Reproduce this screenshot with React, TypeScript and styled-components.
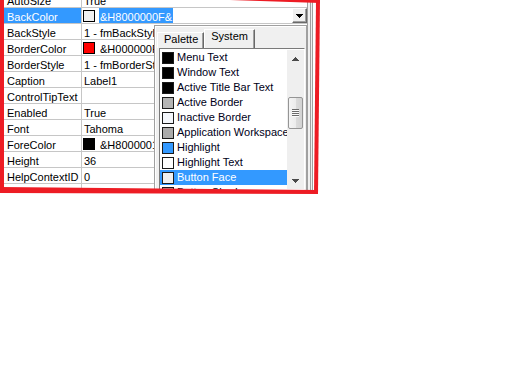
import React from "react";
import styled, { createGlobalStyle } from "styled-components";

const GlobalStyle = createGlobalStyle`
  html, body { margin: 0; padding: 0; background: #ffffff; }
  body {
    font-family: "Liberation Sans", Arial, sans-serif;
    font-size: 11px;
    color: #000000;
  }
`;

const Stage = styled.div`
  position: relative;
  width: 320px;
  height: 195px;
  padding-left: 4px;
  box-sizing: border-box;
`;

const Annotation = styled.svg`
  position: absolute;
  left: 0;
  top: 0;
  width: 320px;
  height: 195px;
  pointer-events: none;
  z-index: 10;
`;

const PropWindow = styled.div`
  position: relative;
  width: 310px;
  height: 191px;
  overflow: hidden;
  display: flex;
  align-items: flex-start;
  background: #f0f0f0;
`;

const Grid = styled.div`
  flex: none;
  width: 303px;
  margin-top: -8px;
  background: #ffffff;
  border-right: 1px solid #a0a0a0;
`;

const WindowEdge = styled.div`
  flex: 1;
  align-self: stretch;
  background: linear-gradient(
    to right,
    #f0f0f0 0 2px,
    #a0a0a0 2px 3px,
    #f0f0f0 3px 4px,
    #a0a0a0 4px 5px,
    #ffffff 5px 6px
  );
`;

const Row = styled.div`
  display: flex;
  height: 16px;
  box-sizing: border-box;
  border-bottom: 1px solid #c6c6c6;
`;

const NameCell = styled.div<{ $selected?: boolean }>`
  flex: none;
  width: 78px;
  box-sizing: border-box;
  border-right: 1px solid #c6c6c6;
  padding: 3px 0 0 3px;
  line-height: 12px;
  white-space: nowrap;
  overflow: hidden;
  background: ${(p) => (p.$selected ? "#3399ff" : "#ffffff")};
  color: ${(p) => (p.$selected ? "#ffffff" : "#000000")};
`;

const ValueCell = styled.div`
  flex: 1;
  min-width: 0;
  display: flex;
  align-items: flex-start;
  padding: 3px 0 0 2px;
  line-height: 12px;
  white-space: nowrap;
  overflow: hidden;
`;

const ValueSwatch = styled.span<{ $color: string }>`
  flex: none;
  width: 12px;
  height: 12px;
  margin: -1px 5px 0 -1px;
  box-sizing: border-box;
  border: 1px solid #000000;
  background: ${(p) => p.$color};
`;

const Combo = styled.div`
  flex: 1;
  min-width: 0;
  display: flex;
  align-items: flex-start;
  background: #ffffff;
  white-space: nowrap;
`;

const ComboSwatch = styled(ValueSwatch)`
  margin: 2px 4px 0 1px;
`;

const SelectedText = styled.span`
  display: block;
  height: 15px;
  box-sizing: border-box;
  padding: 3px 1px 0 1px;
  line-height: 12px;
  background: #3399ff;
  color: #ffffff;
`;

const DropButton = styled.div`
  flex: none;
  margin-left: auto;
  width: 15px;
  height: 15px;
  box-sizing: border-box;
  display: flex;
  align-items: center;
  justify-content: center;
  background: #f0f0f0;
  border-top: 1px solid #ffffff;
  border-left: 1px solid #ffffff;
  border-right: 1px solid #696969;
  border-bottom: 1px solid #696969;
  box-shadow: inset -1px -1px 0 #a0a0a0;
`;

const Popup = styled.div`
  position: absolute;
  left: 150px;
  top: 25px;
  width: 153px;
  height: 175px;
  box-sizing: border-box;
  border: 1px solid #a0a0a0;
  box-shadow: inset 1px 1px 0 #ffffff;
  background: #f0f0f0;
  padding: 3px 1px 0 2px;
  display: flex;
  flex-direction: column;
  z-index: 2;
`;

const TabRow = styled.div`
  display: flex;
  align-items: flex-end;
  height: 19px;
  flex: none;
`;

const Tab = styled.div<{ $active?: boolean }>`
  box-sizing: border-box;
  height: ${(p) => (p.$active ? 19 : 16)}px;
  padding: 0 ${(p) => (p.$active ? 6 : 5)}px 0 6px;
  line-height: 13px;
  white-space: nowrap;
  background: #f0f0f0;
  border-left: 1px solid #ffffff;
  border-top: 1px solid #ffffff;
  border-right: 1px solid #696969;
  box-shadow: inset -1px 0 0 #a0a0a0;
`;

const ListBox = styled.div`
  flex: 1;
  margin-left: 2px;
  width: 146px;
  box-sizing: border-box;
  display: flex;
  align-items: flex-start;
  border-left: 1px solid #7a7a7a;
  border-top: 1px solid #7a7a7a;
  border-right: 1px solid #ffffff;
  padding-top: 1px;
  background: #ffffff;
`;

const List = styled.div`
  width: 127px;
  flex: none;
  display: flex;
  flex-direction: column;
`;

const ListRow = styled.div<{ $selected?: boolean }>`
  height: 15px;
  flex: none;
  display: flex;
  align-items: center;
  padding-left: 2px;
  line-height: 15px;
  white-space: nowrap;
  background: ${(p) => (p.$selected ? "#3399ff" : "transparent")};
  color: ${(p) => (p.$selected ? "#ffffff" : "#000018")};
`;

const ListSwatch = styled.span<{ $color: string }>`
  flex: none;
  width: 12px;
  height: 12px;
  margin-right: 3px;
  box-sizing: border-box;
  border: 1px solid #1a1a1a;
  background: ${(p) => p.$color};
`;

const ScrollBar = styled.div`
  flex: none;
  width: 17px;
  height: 139px;
  display: flex;
  flex-direction: column;
  background: #efefef;
`;

const ScrollButton = styled.div`
  flex: none;
  height: 17px;
  display: flex;
  align-items: center;
  justify-content: center;
`;

const ScrollTrack = styled.div`
  flex: 1;
  display: flex;
  flex-direction: column;
  align-items: center;
`;

const Thumb = styled.div`
  margin-top: 30px;
  width: 15px;
  height: 32px;
  box-sizing: border-box;
  border: 1px solid #959595;
  border-radius: 2px;
  background: linear-gradient(to right, #f4f4f4 0%, #ececec 50%, #dcdcdc 50%, #d2d2d2 100%);
  display: flex;
  align-items: center;
  justify-content: center;
`;

const Grip = styled.div`
  width: 7px;
  height: 8px;
  background: repeating-linear-gradient(
    to bottom,
    #6b6b6b 0 1px,
    #fbfbfb 1px 2px
  );
`;

type Arrow = "up" | "down";

const ArrowIcon = ({ dir, color }: { dir: Arrow; color: string }) => (
  <svg width="7" height="4" viewBox="0 0 7 4" shapeRendering="crispEdges">
    {dir === "down" ? (
      <polygon points="0,0 7,0 3.5,4" fill={color} />
    ) : (
      <polygon points="0,4 7,4 3.5,0" fill={color} />
    )}
  </svg>
);

type Prop = {
  name: string;
  value: string;
  swatch?: string;
  combo?: boolean;
};

const props: Prop[] = [
  { name: "AutoSize", value: "True" },
  { name: "BackColor", value: "&H8000000F&", swatch: "#f0f0f0", combo: true },
  { name: "BackStyle", value: "1 - fmBackStyleOpaque" },
  { name: "BorderColor", value: "&H000000FF&", swatch: "#ff0000" },
  { name: "BorderStyle", value: "1 - fmBorderStyleSingle" },
  { name: "Caption", value: "Label1" },
  { name: "ControlTipText", value: "" },
  { name: "Enabled", value: "True" },
  { name: "Font", value: "Tahoma" },
  { name: "ForeColor", value: "&H80000012&", swatch: "#000000" },
  { name: "Height", value: "36" },
  { name: "HelpContextID", value: "0" },
  { name: "Left", value: "108" },
];

const systemColors = [
  { name: "Menu Text", color: "#000000" },
  { name: "Window Text", color: "#000000" },
  { name: "Active Title Bar Text", color: "#000000" },
  { name: "Active Border", color: "#b4b4b4" },
  { name: "Inactive Border", color: "#f4f7fc" },
  { name: "Application Workspace", color: "#ababab" },
  { name: "Highlight", color: "#3399ff" },
  { name: "Highlight Text", color: "#ffffff" },
  { name: "Button Face", color: "#f0f0f0", selected: true },
  { name: "Button Shadow", color: "#a0a0a0" },
];

export default function App() {
  return (
    <>
      <GlobalStyle />
      <Stage>
        <PropWindow>
          <Grid>
            {props.map((p) => (
              <Row key={p.name}>
                <NameCell $selected={p.combo}>{p.name}</NameCell>
                {p.combo ? (
                  <Combo>
                    <ComboSwatch $color={p.swatch ?? "#fff"} />
                    <SelectedText>{p.value}</SelectedText>
                    <DropButton>
                      <ArrowIcon dir="down" color="#000000" />
                    </DropButton>
                  </Combo>
                ) : (
                  <ValueCell>
                    {p.swatch && <ValueSwatch $color={p.swatch} />}
                    {p.value}
                  </ValueCell>
                )}
              </Row>
            ))}
          </Grid>
          <WindowEdge />
          <Popup>
            <TabRow>
              <Tab>Palette</Tab>
              <Tab $active>System</Tab>
            </TabRow>
            <ListBox>
              <List>
                {systemColors.map((c) => (
                  <ListRow key={c.name} $selected={c.selected}>
                    <ListSwatch $color={c.color} />
                    {c.name}
                  </ListRow>
                ))}
              </List>
              <ScrollBar>
                <ScrollButton>
                  <ArrowIcon dir="up" color="#4a4a4a" />
                </ScrollButton>
                <ScrollTrack>
                  <Thumb>
                    <Grip />
                  </Thumb>
                </ScrollTrack>
                <ScrollButton>
                  <ArrowIcon dir="down" color="#4a4a4a" />
                </ScrollButton>
              </ScrollBar>
            </ListBox>
          </Popup>
        </PropWindow>
        <Annotation viewBox="0 0 320 195">
          <polygon points="0,0 4,0 4,193 0,193" fill="#ed1c24" />
          <polygon points="0,187 318,190 318,194 0,193" fill="#ed1c24" />
          <polygon points="316,0 320,0 318,194 314,194" fill="#ed1c24" />
          <polygon points="230,0 320,0 320,3" fill="#ed1c24" />
        </Annotation>
      </Stage>
    </>
  );
}
